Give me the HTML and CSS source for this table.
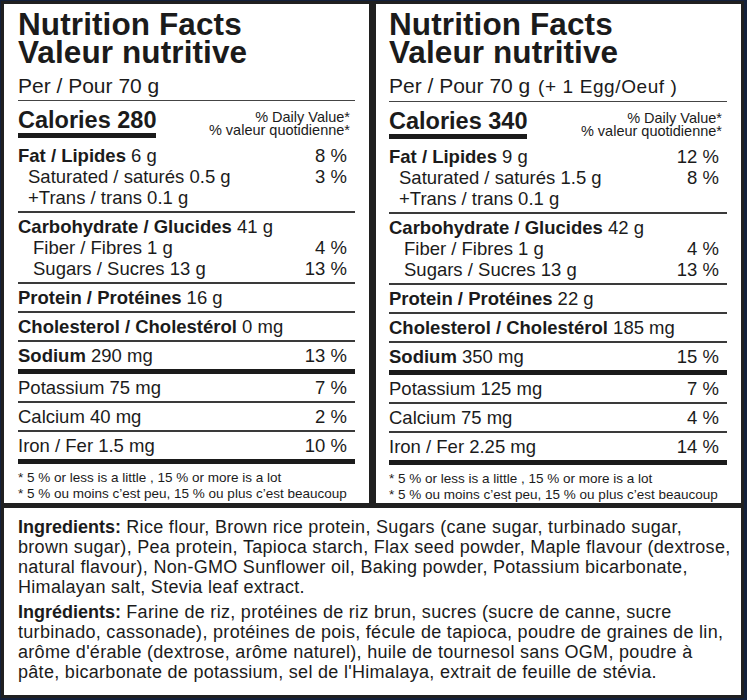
FILE: index.html
```html
<!DOCTYPE html>
<html lang="en">
<head>
<meta charset="utf-8">
<title>Nutrition Facts</title>
<link rel="stylesheet" href="styles.css">
</head>
<body>
<div class="page">
  <div class="panels">
    <section class="panel">
      <h1 class="title">Nutrition Facts<br>Valeur nutritive</h1>
      <div class="per">Per / Pour 70 g</div>
      <div class="cal-row">
        <span class="calories">Calories 280</span>
        <span class="dv">% Daily Value*<br>% valeur quotidienne*</span>
      </div>
      <div class="group">
        <div class="row"><span><b>Fat / Lipides</b> 6 g</span><span class="pct">8 %</span></div>
        <div class="row ind1"><span>Saturated / saturés 0.5 g</span><span class="pct">3 %</span></div>
        <div class="row ind1"><span>+Trans / trans 0.1 g</span></div>
      </div>
      <div class="group">
        <div class="row"><span><b>Carbohydrate / Glucides</b> 41 g</span></div>
        <div class="row ind2"><span>Fiber / Fibres 1 g</span><span class="pct">4 %</span></div>
        <div class="row ind2"><span>Sugars / Sucres 13 g</span><span class="pct">13 %</span></div>
      </div>
      <div class="group">
        <div class="row"><span><b>Protein / Protéines</b> 16 g</span></div>
      </div>
      <div class="group">
        <div class="row"><span><b>Cholesterol / Cholestérol</b> 0 mg</span></div>
      </div>
      <div class="group thick">
        <div class="row"><span><b>Sodium</b> 290 mg</span><span class="pct">13 %</span></div>
      </div>
      <div class="group">
        <div class="row"><span>Potassium 75 mg</span><span class="pct">7 %</span></div>
      </div>
      <div class="group">
        <div class="row"><span>Calcium 40 mg</span><span class="pct">2 %</span></div>
      </div>
      <div class="group thick">
        <div class="row"><span>Iron / Fer 1.5 mg</span><span class="pct">10 %</span></div>
      </div>
      <p class="foot">* 5 % or less is a little , 15 % or more is a lot<br>* 5 % ou moins c’est peu, 15 % ou plus c’est beaucoup</p>
    </section>
    <section class="panel">
      <h1 class="title">Nutrition Facts<br>Valeur nutritive</h1>
      <div class="per">Per / Pour 70 g <span class="egg">(+ 1 Egg/Oeuf )</span></div>
      <div class="cal-row">
        <span class="calories">Calories 340</span>
        <span class="dv">% Daily Value*<br>% valeur quotidienne*</span>
      </div>
      <div class="group">
        <div class="row"><span><b>Fat / Lipides</b> 9 g</span><span class="pct">12 %</span></div>
        <div class="row ind1"><span>Saturated / saturés 1.5 g</span><span class="pct">8 %</span></div>
        <div class="row ind1"><span>+Trans / trans 0.1 g</span></div>
      </div>
      <div class="group">
        <div class="row"><span><b>Carbohydrate / Glucides</b> 42 g</span></div>
        <div class="row ind2"><span>Fiber / Fibres 1 g</span><span class="pct">4 %</span></div>
        <div class="row ind2"><span>Sugars / Sucres 13 g</span><span class="pct">13 %</span></div>
      </div>
      <div class="group">
        <div class="row"><span><b>Protein / Protéines</b> 22 g</span></div>
      </div>
      <div class="group">
        <div class="row"><span><b>Cholesterol / Cholestérol</b> 185 mg</span></div>
      </div>
      <div class="group thick">
        <div class="row"><span><b>Sodium</b> 350 mg</span><span class="pct">15 %</span></div>
      </div>
      <div class="group">
        <div class="row"><span>Potassium 125 mg</span><span class="pct">7 %</span></div>
      </div>
      <div class="group">
        <div class="row"><span>Calcium 75 mg</span><span class="pct">4 %</span></div>
      </div>
      <div class="group thick">
        <div class="row"><span>Iron / Fer 2.25 mg</span><span class="pct">14 %</span></div>
      </div>
      <p class="foot">* 5 % or less is a little , 15 % or more is a lot<br>* 5 % ou moins c’est peu, 15 % ou plus c’est beaucoup</p>
    </section>
  </div>
  <section class="ingredients">
    <p><b>Ingredients:</b> Rice flour, Brown rice protein, Sugars (cane sugar, turbinado sugar, brown sugar), Pea protein, Tapioca starch, Flax seed powder, Maple flavour (dextrose, natural flavour), Non-GMO Sunflower oil, Baking powder, Potassium bicarbonate, Himalayan salt, Stevia leaf extract.</p>
    <p><b>Ingrédients:</b> Farine de riz, protéines de riz brun, sucres (sucre de canne, sucre turbinado, cassonade), protéines de pois, fécule de tapioca, poudre de graines de lin, arôme d'érable (dextrose, arôme naturel), huile de tournesol sans OGM, poudre à pâte, bicarbonate de potassium, sel de l'Himalaya, extrait de feuille de stévia.</p>
  </section>
</div>
</body>
</html>
```

FILE: styles.css
```css
html, body {
  margin: 0;
  padding: 0;
}
body {
  background: #13203a;
  width: 747px;
  height: 700px;
  overflow: hidden;
  font-family: "Liberation Sans", Arial, sans-serif;
  color: #1b1b1b;
}
.page {
  padding: 1px 3px 0 1px;
}
.panels {
  display: grid;
  grid-template-columns: 371px 372px;
}
.panel {
  background: #fff;
  border: 3px solid #202020;
  padding: 6px 14px 0 14px;
  height: 493px;
  box-sizing: content-box;
}
.panel + .panel {
  border-left-width: 4px;
  padding-left: 13px;
}
.title {
  margin: 0;
  font-size: 31.5px;
  line-height: 28px;
  font-weight: bold;
  letter-spacing: 0.1px;
}
.per {
  margin-top: 8px;
  font-size: 21px;
  line-height: 24px;
  padding-bottom: 2px;
  border-bottom: 1px solid #444;
}
.egg {
  font-size: 19px;
  letter-spacing: 0.6px;
  margin-left: 2px;
}
.cal-row {
  display: flex;
  justify-content: space-between;
  align-items: flex-start;
  margin-top: 6px;
  height: 31px;
}
.calories {
  display: inline-block;
  font-size: 23.5px;
  line-height: 26px;
  font-weight: bold;
  border-bottom: 5px solid #1b1b1b;
}
.dv {
  margin-top: 4px;
  padding-right: 5px;
  font-size: 14.5px;
  line-height: 12.5px;
  text-align: right;
}
.group {
  padding: 3px 0 3px;
  border-bottom: 2px solid #3a3a3a;
}
.cal-row + .group {
  margin-top: 4px;
}
.group.thick {
  border-bottom: 5px solid #1b1b1b;
}
.row {
  display: flex;
  justify-content: space-between;
  font-size: 18.5px;
  line-height: 21px;
  white-space: nowrap;
}
.row b {
  font-weight: bold;
}
.row.ind1 {
  padding-left: 10px;
}
.row.ind2 {
  padding-left: 15px;
}
.pct {
  padding-right: 8px;
}
.foot {
  margin: 6px 0 0;
  font-size: 13.5px;
  line-height: 16px;
  white-space: nowrap;
}
.ingredients {
  background: #fff;
  border: 3px solid #202020;
  border-top-width: 2px;
  padding: 9px 4px 13px 14px;
  font-size: 18px;
  line-height: 20px;
  letter-spacing: 0.3px;
}
.ingredients b {
  letter-spacing: 0;
}
.ingredients p {
  margin: 0;
}
.ingredients p + p {
  margin-top: 5px;
}
```
